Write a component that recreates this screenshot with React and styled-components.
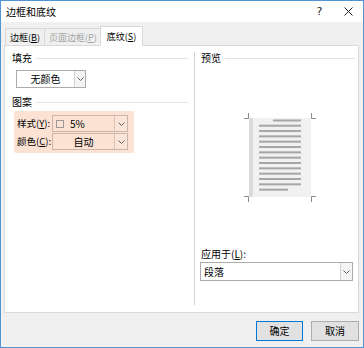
import React from "react";
import styled, { createGlobalStyle } from "styled-components";

const Global = createGlobalStyle`
  html, body { margin: 0; padding: 0; background: #fff; }
  * { box-sizing: border-box; }
`;

const Window = styled.div`
  width: 364px;
  height: 348px;
  border: 1px solid #4f94d4;
  background: #f0f0f0;
  display: flex;
  flex-direction: column;
  font-family: "Noto Sans CJK SC", "Microsoft YaHei", sans-serif;
  font-size: 10px;
  color: #000;
  line-height: 1;
  white-space: nowrap;
`;

const TitleBar = styled.div`
  height: 21px;
  background: #fff;
  display: flex;
  align-items: center;
  padding-left: 5px;
  flex: none;
`;

const Title = styled.div`
  flex: 1;
  font-size: 10px;
`;

const TitleButton = styled.div`
  width: 29px;
  height: 21px;
  display: flex;
  align-items: center;
  justify-content: center;
  font-family: "Segoe UI", "DejaVu Sans", sans-serif;
  font-size: 11px;
  color: #222;
`;

const Body = styled.div`
  flex: 1;
  display: flex;
  flex-direction: column;
  padding: 4px 4px 0 3px;
`;

const TabRow = styled.div`
  height: 19px;
  display: flex;
  align-items: flex-end;
  padding-left: 1px;
  position: relative;
  z-index: 1;
`;

const Tab = styled.div`
  height: ${(p) => (p.$active ? "20px" : "17px")};
  margin: ${(p) => (p.$active ? "0 -2px -1px -2px" : "0")};
  padding: 0 ${(p) => (p.$active ? "6px" : "4px")};
  display: flex;
  align-items: center;
  font-size: 9px;
  background: ${(p) => (p.$active ? "#fff" : "#f0f0f0")};
  border: 1px solid #d9d9d9;
  border-bottom: ${(p) => (p.$active ? "1px solid #fff" : "none")};
  border-left-width: ${(p) => (p.$first || p.$active ? "1px" : "0")};
  color: ${(p) => (p.$disabled ? "#a3a3a3" : "#000")};
`;

const U = styled.span`
  text-decoration: underline;
`;

const Panel = styled.div`
  height: 268px;
  background: #fff;
  border: 1px solid #d9d9d9;
  display: flex;
`;

const LeftCol = styled.div`
  width: 189px;
  flex: none;
  padding: 4px 6px 0 7px;
  display: flex;
  flex-direction: column;
`;

const Divider = styled.div`
  width: 1px;
  background: #d4d4d4;
  margin: 6px 0 7px;
  flex: none;
`;

const RightCol = styled.div`
  flex: 1;
  padding: 4px 3px 0 6px;
  display: flex;
  flex-direction: column;
`;

const GroupHeader = styled.div`
  height: 16px;
  display: flex;
  align-items: center;
  gap: 4px;
  margin-top: ${(p) => p.$mt || 0}px;
  &::after {
    content: "";
    flex: 1;
    height: 1px;
    background: #e3e3e3;
  }
`;

const Select = styled.div`
  width: ${(p) => p.$w}px;
  height: ${(p) => p.$h || 18}px;
  margin: ${(p) => p.$m || 0};
  border: 1px solid ${(p) => (p.$tint ? "#cdb6a8" : "#acacac")};
  background: ${(p) => (p.$tint ? "transparent" : "#fff")};
  display: flex;
  align-items: center;
  flex: none;
`;

const SelectValue = styled.div`
  flex: 1;
  display: flex;
  align-items: center;
  justify-content: ${(p) => (p.$left ? "flex-start" : "center")};
  padding-left: ${(p) => (p.$left ? "3px" : "0")};
  gap: 6px;
  height: 100%;
`;

const DropButton = styled.div`
  width: ${(p) => p.$w || 11}px;
  height: 100%;
  border-left: 1px solid ${(p) => (p.$tint ? "#d8c3b6" : "#d2d2d2")};
  background: ${(p) => (p.$tint ? "rgba(255,255,255,0.12)" : "#f4f4f4")};
  display: flex;
  align-items: center;
  justify-content: center;
`;

const Swatch = styled.span`
  width: 8px;
  height: 8px;
  border: 1px solid #9a9a9a;
  background: transparent;
`;

const Highlight = styled.div`
  margin: 1px 0 0 2px;
  width: 120px;
  padding: 4px 6px 3px 3px;
  background: #fbe2d3;
  border-radius: 2px;
  display: flex;
  flex-direction: column;
  gap: 1px;
`;

const FieldRow = styled.div`
  display: flex;
  align-items: center;
`;

const FieldLabel = styled.div`
  width: 35px;
  flex: none;
  font-size: 9.5px;
`;

const PreviewBox = styled.div`
  margin: 46px 0 0 42px;
  width: 74px;
  height: 91px;
`;

const ApplyLabel = styled.div`
  margin-top: 44px;
  height: 14px;
  display: flex;
  align-items: center;
`;

const Footer = styled.div`
  flex: 1;
  display: flex;
  justify-content: flex-end;
  align-items: flex-start;
  padding-top: 8px;
  gap: 8px;
`;

const Button = styled.div`
  width: ${(p) => p.$w}px;
  height: 20px;
  background: #e1e1e1;
  border: 1px solid ${(p) => (p.$default ? "#0078d7" : "#adadad")};
  display: flex;
  align-items: center;
  justify-content: center;
`;

const Chevron = () => (
  <svg width="7" height="4" viewBox="0 0 7 4">
    <path d="M0.5 0.5 L3.5 3.5 L6.5 0.5" fill="none" stroke="#606060" strokeWidth="1" />
  </svg>
);

const CloseIcon = () => (
  <svg width="9" height="9" viewBox="0 0 9 9">
    <path d="M0.5 0.5 L8.5 8.5 M8.5 0.5 L0.5 8.5" stroke="#222" strokeWidth="1" />
  </svg>
);

const PagePreview = () => {
  const lines = [];
  for (let i = 0; i < 12; i++) {
    const y = 13.7 + i * 5.33;
    lines.push(<rect key={i} x="16" y={y - 1} width="42" height="2" fill="#a6a6a6" />);
  }
  const mark = "#8a8a8a";
  return (
    <svg width="74" height="91" viewBox="0 0 74 91">
      <rect x="6" y="6" width="62" height="79" fill="#f1f1f1" />
      <rect x="6" y="6" width="4" height="79" fill="#dadada" />
      <rect x="30" y="7.5" width="28" height="2" fill="#a6a6a6" />
      {lines}
      <rect x="16" y={13.7 + 12 * 5.33 - 1} width="29" height="2" fill="#a6a6a6" />
      <path
        d="M5.5 1 V6.5 H1 M68.5 1 V6.5 H73 M5.5 90 V84.5 H1 M68.5 90 V84.5 H73"
        fill="none"
        stroke={mark}
        strokeWidth="1"
      />
    </svg>
  );
};

export default function App() {
  return (
    <>
      <Global />
      <Window>
        <TitleBar>
          <Title>边框和底纹</Title>
          <TitleButton>?</TitleButton>
          <TitleButton>
            <CloseIcon />
          </TitleButton>
        </TitleBar>
        <Body>
          <TabRow>
            <Tab $first>
              边框(<U>B</U>)
            </Tab>
            <Tab $disabled>
              页面边框(<U>P</U>)
            </Tab>
            <Tab $active>
              底纹(<U>S</U>)
            </Tab>
          </TabRow>
          <Panel>
            <LeftCol>
              <GroupHeader>填充</GroupHeader>
              <Select $w={70} $h={18} $m="4px 0 0 4px">
                <SelectValue>无颜色</SelectValue>
                <DropButton $w={11}>
                  <Chevron />
                </DropButton>
              </Select>
              <GroupHeader $mt={6}>图案</GroupHeader>
              <Highlight>
                <FieldRow>
                  <FieldLabel>
                    样式(<U>Y</U>):
                  </FieldLabel>
                  <Select $w={76} $h={17} $tint>
                    <SelectValue $left>
                      <Swatch />
                      5%
                    </SelectValue>
                    <DropButton $w={13} $tint>
                      <Chevron />
                    </DropButton>
                  </Select>
                </FieldRow>
                <FieldRow>
                  <FieldLabel>
                    颜色(<U>C</U>):
                  </FieldLabel>
                  <Select $w={76} $h={17} $tint>
                    <SelectValue>自动</SelectValue>
                    <DropButton $w={13} $tint>
                      <Chevron />
                    </DropButton>
                  </Select>
                </FieldRow>
              </Highlight>
            </LeftCol>
            <Divider />
            <RightCol>
              <GroupHeader>预览</GroupHeader>
              <PreviewBox>
                <PagePreview />
              </PreviewBox>
              <ApplyLabel>
                应用于(<U>L</U>):
              </ApplyLabel>
              <Select $w={153} $h={19} $m="1px 0 0 -1px">
                <SelectValue $left>段落</SelectValue>
                <DropButton $w={12}>
                  <Chevron />
                </DropButton>
              </Select>
            </RightCol>
          </Panel>
          <Footer>
            <Button $w={47} $default>
              确定
            </Button>
            <Button $w={48}>取消</Button>
          </Footer>
        </Body>
      </Window>
    </>
  );
}
